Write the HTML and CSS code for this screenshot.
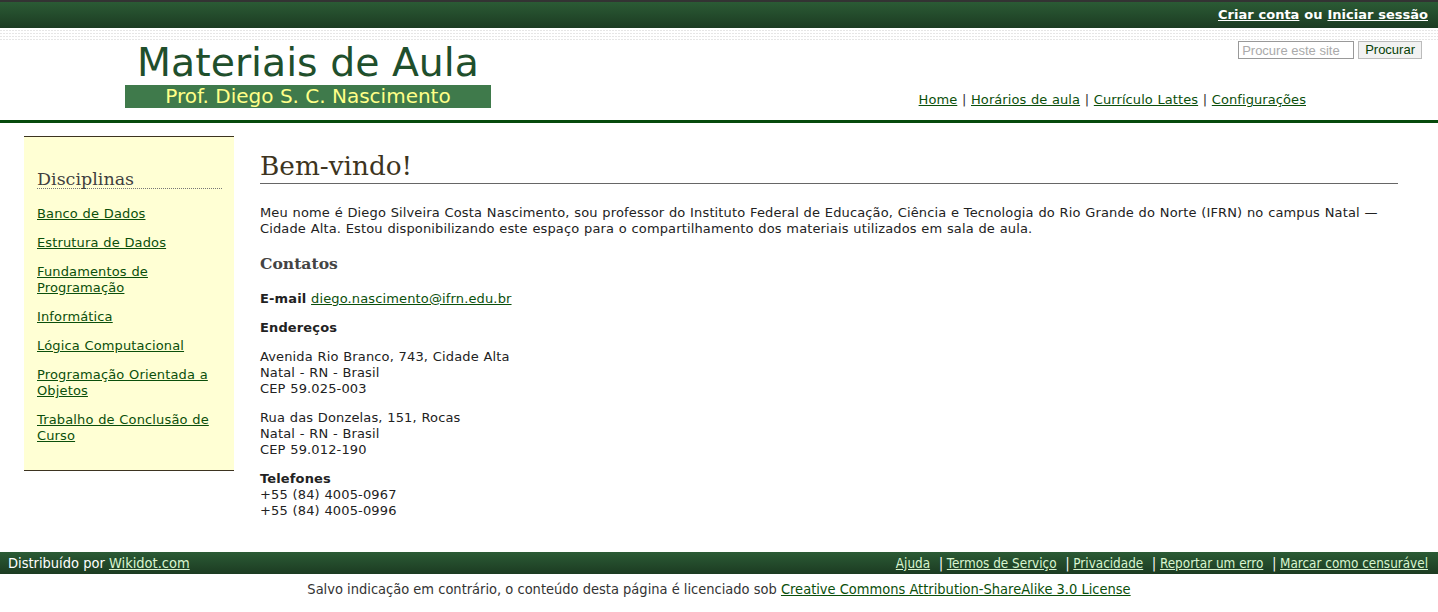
FILE: index.html
```html
<!DOCTYPE html>
<html lang="pt">
<head>
<meta charset="utf-8">
<title>Materiais de Aula</title>
<link rel="stylesheet" href="styles.css">
</head>
<body>
<div class="topbar">
  <a href="#">Criar conta</a> ou <a href="#">Iniciar sessão</a>
</div>
<div class="texture"></div>
<header class="header">
  <div class="brand">
    <h1 class="site-title">Materiais de Aula</h1>
    <div class="site-sub">Prof. Diego S. C. Nascimento</div>
  </div>
  <div class="header-right">
    <form class="search">
      <input type="text" placeholder="Procure este site">
      <button type="button">Procurar</button>
    </form>
    <nav class="topnav">
      <a href="#">Home</a> | <a href="#">Horários de aula</a> | <a href="#">Currículo Lattes</a> | <a href="#">Configurações</a>
    </nav>
  </div>
</header>
<div class="content-wrap">
  <aside class="side">
    <h3 class="side-title">Disciplinas</h3>
    <p><a href="#">Banco de Dados</a></p>
    <p><a href="#">Estrutura de Dados</a></p>
    <p><a href="#">Fundamentos de Programação</a></p>
    <p><a href="#">Informática</a></p>
    <p><a href="#">Lógica Computacional</a></p>
    <p><a href="#">Programação Orientada a Objetos</a></p>
    <p><a href="#">Trabalho de Conclusão de Curso</a></p>
  </aside>
  <main class="main">
    <h1 class="page-title">Bem-vindo!</h1>
    <p>Meu nome é Diego Silveira Costa Nascimento, sou professor do Instituto Federal de Educação, Ciência e Tecnologia do Rio Grande do Norte (IFRN) no campus Natal — Cidade Alta. Estou disponibilizando este espaço para o compartilhamento dos materiais utilizados em sala de aula.</p>
    <h2 class="sec-title">Contatos</h2>
    <p><strong>E-mail</strong> <a href="#">diego.nascimento@ifrn.edu.br</a></p>
    <p><strong>Endereços</strong></p>
    <p>Avenida Rio Branco, 743, Cidade Alta<br>Natal - RN - Brasil<br>CEP 59.025-003</p>
    <p>Rua das Donzelas, 151, Rocas<br>Natal - RN - Brasil<br>CEP 59.012-190</p>
    <p><strong>Telefones</strong><br>+55 (84) 4005-0967<br>+55 (84) 4005-0996</p>
  </main>
</div>
<footer class="footer">
  <div class="foot-left">Distribuído por <a href="#">Wikidot.com</a></div>
  <div class="foot-right">
    <a href="#">Ajuda</a> | <a href="#">Termos de Serviço</a> | <a href="#">Privacidade</a> | <a href="#">Reportar um erro</a> | <a href="#">Marcar como censurável</a>
  </div>
</footer>
<div class="license">Salvo indicação em contrário, o conteúdo desta página é licenciado sob <a href="#">Creative Commons Attribution-ShareAlike 3.0 License</a></div>
</body>
</html>
```
FILE: styles.css
```css
html, body {
  margin: 0;
  padding: 0;
  background: #fff;
}
body {
  font-family: "DejaVu Sans", Verdana, sans-serif;
  font-size: 13px;
  color: #222;
  letter-spacing: 0.14px;
  word-spacing: 0.4px;
}
a {
  color: #0b4f0b;
}
.topbar {
  height: 26px;
  border-top: 2px solid #333;
  background: linear-gradient(#2b5b35, #1c3b22);
  color: #fff;
  font-weight: bold;
  text-align: right;
  line-height: 25px;
  padding-right: 10px;
  font-size: 13px;
  letter-spacing: 0;
}
.topbar a {
  color: #fff;
}
.texture {
  height: 10px;
  border-top: 2px solid #fff;
  background-image:
    repeating-linear-gradient(90deg, rgba(255,255,255,0) 0 2px, #fff 2px 3px),
    repeating-linear-gradient(0deg, #e4e4e4 0 1px, #fff 1px 3px);
  opacity: 0.9;
}
.header {
  display: flex;
  justify-content: space-between;
  height: 80px;
  border-bottom: 3px solid #064a0c;
}
.brand {
  margin-left: 125px;
  width: 366px;
  text-align: center;
  padding-top: 1px;
  letter-spacing: 0;
  word-spacing: 0;
}
.site-title {
  margin: 0;
  font-weight: normal;
  font-size: 39.4px;
  line-height: 42px;
  color: #1f4f2c;
}
.site-sub {
  margin-top: 2px;
  background: #3f7a4b;
  color: #ffff88;
  font-size: 20px;
  line-height: 23px;
  height: 23px;
}
.header-right {
  display: flex;
  flex-direction: column;
  align-items: flex-end;
}
.search {
  margin: 1px 16px 0 0;
  display: flex;
  gap: 4px;
  letter-spacing: 0;
  word-spacing: 0;
}
.search input {
  width: 108px;
  height: 14px;
  padding: 1px 3px;
  border: 1px solid #999;
  font-family: "Liberation Sans", Arial, sans-serif;
  font-size: 13px;
  color: #333;
}
.search input::placeholder {
  color: #aaa;
}
.search button {
  height: 18px;
  padding: 0 6px;
  border: 1px solid #bbb;
  background: #f2f2f2;
  color: #063f06;
  font-family: "Liberation Sans", Arial, sans-serif;
  font-size: 13px;
  line-height: 16px;
}
.topnav {
  margin-top: auto;
  margin-right: 132px;
  margin-bottom: 13px;
  color: #333;
  letter-spacing: 0.08px;
}
.content-wrap {
  display: flex;
  align-items: flex-start;
  padding: 13px 40px 0 24px;
  gap: 26px;
}
.side {
  flex: 0 0 185px;
  background: #ffffd4;
  border-top: 1px solid #3d3420;
  border-bottom: 1px solid #3d3420;
  padding: 34px 12px 13px 13px;
}
.side-title {
  margin: 0 0 17px;
  font-family: "DejaVu Serif", Georgia, serif;
  font-weight: normal;
  font-size: 17.5px;
  letter-spacing: 0;
  line-height: 17px;
  color: #3f3f3f;
  border-bottom: 1px dotted #777;
}
.side p {
  margin: 0 0 13px;
  line-height: 16px;
}
.main {
  flex: 1;
}
.main p {
  margin: 0 0 13px;
  line-height: 16px;
}
.page-title {
  margin: 13px 0 21px;
  font-family: "DejaVu Serif", Georgia, serif;
  font-weight: normal;
  font-size: 26.3px;
  letter-spacing: 0;
  line-height: 34px;
  color: #3d3420;
  border-bottom: 1px solid #666;
}
.sec-title {
  margin: 17px 0 17px;
  font-family: "DejaVu Serif", Georgia, serif;
  font-size: 15.6px;
  letter-spacing: 0;
  line-height: 20px;
  color: #444;
}
.footer {
  margin-top: 20px;
  height: 22px;
  line-height: 22px;
  display: flex;
  justify-content: space-between;
  align-items: baseline;
  padding: 0 10px 0 8px;
  background: linear-gradient(#2b5b35, #1c3b22);
  color: #fff;
  font-family: "DejaVu Sans Condensed", "DejaVu Sans", sans-serif;
  font-stretch: condensed;
  font-size: 14.5px;
  letter-spacing: 0;
  word-spacing: 0;
}
.footer a {
  color: #d8f5d0;
}
.foot-right {
  font-size: 13.4px;
}
.foot-right a {
  margin-right: 5px;
}
.foot-right a:last-child {
  margin-right: 0;
}
.license {
  text-align: center;
  padding: 6px 0;
  color: #333;
  font-family: "DejaVu Sans Condensed", "DejaVu Sans", sans-serif;
  font-stretch: condensed;
  font-size: 14.5px;
  letter-spacing: 0;
  word-spacing: 0;
  line-height: 18px;
}
```
